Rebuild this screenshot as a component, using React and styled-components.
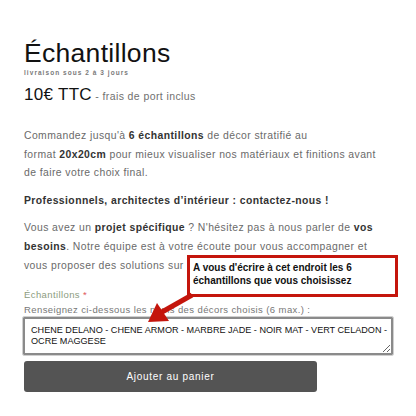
import styled, { createGlobalStyle } from "styled-components";

const GlobalStyle = createGlobalStyle`
  * { box-sizing: border-box; }
  body {
    margin: 0;
    background: #ffffff;
    font-family: "Liberation Sans", Arial, Helvetica, sans-serif;
  }
`;

export default function App() {
  return (
    <Page>
      <GlobalStyle />
      <Title>Échantillons</Title>
      <Delivery>livraison sous 2 à 3 jours</Delivery>
      <PriceRow>
        <Price>10€ TTC</Price>
        <PriceNote> - frais de port inclus</PriceNote>
      </PriceRow>

      <Text>
        Commandez jusqu'à <b>6 échantillons</b> de décor stratifié au
        <br />
        format <b>20x20cm</b> pour mieux visualiser nos matériaux et finitions
        avant de faire votre choix final.
      </Text>
      <Text>
        <b>Professionnels, architectes d’intérieur : contactez-nous !</b>
      </Text>
      <Text>
        Vous avez un <b>projet spécifique</b> ? N'hésitez pas à nous parler de{" "}
        <b>vos besoins</b>. Notre équipe est à votre écoute pour vous
        accompagner et vous proposer des solutions sur mesure.
      </Text>

      <Field>
        <Label>
          Échantillons <Star>*</Star>
        </Label>
        <Hint>Renseignez ci-dessous les noms des décors choisis (6 max.) :</Hint>
        <Area
          rows={2}
          defaultValue="CHENE DELANO - CHENE ARMOR - MARBRE JADE - NOIR MAT - VERT CELADON - OCRE MAGGESE"
        />
      </Field>
      <CartButton>Ajouter au panier</CartButton>

      <Callout>
        A vous d'écrire à cet endroit les 6
        <br />
        échantillons que vous choisissez
      </Callout>
      <Arrow viewBox="140 290 60 40" width="60" height="40">
        <line x1="192" y1="295" x2="162" y2="312" stroke="#c4150c" strokeWidth="5" />
        <polygon points="148,322 157,303 169,321" fill="#c4150c" />
      </Arrow>
    </Page>
  );
}

const Page = styled.div`
  position: relative;
  width: 416px;
  height: 416px;
  padding: 38px 24px 0 24px;
  overflow: hidden;
`;

const Title = styled.h1`
  margin: 0;
  font-size: 26.5px;
  font-weight: 400;
  line-height: 30px;
  letter-spacing: 0.3px;
  color: #121212;
`;

const Delivery = styled.div`
  font-size: 6.5px;
  font-weight: 700;
  line-height: 10px;
  letter-spacing: 1.05px;
  color: #7a7a7a;
`;

const PriceRow = styled.div`
  display: flex;
  align-items: baseline;
  margin-top: 5px;
  line-height: 24px;
`;

const Price = styled.span`
  font-size: 17px;
  letter-spacing: 0.3px;
  color: #121212;
`;

const PriceNote = styled.span`
  white-space: pre;
  font-size: 10.5px;
  letter-spacing: 0.4px;
  color: #707070;
`;

const Text = styled.p`
  margin: 0 0 9px 0;
  width: 364px;
  font-size: 10.4px;
  line-height: 18.6px;
  letter-spacing: 0.42px;
  color: #6a6a6a;

  &:first-of-type {
    margin-top: 19px;
  }

  b {
    color: #333333;
    font-weight: 700;
  }
`;

const Field = styled.div`
  display: flex;
  flex-direction: column;
  margin-top: 12px;
  width: 369px;
`;

const Label = styled.div`
  font-size: 9.5px;
  line-height: 16px;
  letter-spacing: 0.4px;
  color: #8c9c80;
`;

const Star = styled.span`
  color: #e05a5a;
`;

const Hint = styled.div`
  font-size: 9.5px;
  line-height: 14px;
  letter-spacing: 0.4px;
  color: #777777;
`;

const Area = styled.textarea`
  margin: 0 0 0 -1px;
  width: 370px;
  height: 38px;
  padding: 6px 1px 2px 6px;
  border: 2px solid #8a8a8a;
  outline: 1px solid #d0d0d0;
  border-radius: 1px;
  font-family: "Liberation Sans", Arial, sans-serif;
  font-size: 9.1px;
  line-height: 10.5px;
  color: #111111;
  background: #ffffff;
  resize: vertical;
  overflow: hidden;
`;

const CartButton = styled.button`
  display: block;
  margin-top: 6px;
  width: 293px;
  height: 31px;
  border: none;
  border-radius: 3px;
  background: #545454;
  color: #ffffff;
  font-family: "Liberation Sans", Arial, sans-serif;
  font-size: 10px;
  letter-spacing: 0.7px;
`;

const Callout = styled.div`
  position: absolute;
  left: 187px;
  top: 255px;
  width: 211px;
  height: 42px;
  padding: 4px 3px 0 3px;
  border: 3px solid #c4150c;
  background: #ffffff;
  font-size: 10px;
  font-weight: 700;
  line-height: 12.5px;
  color: #111111;
`;

const Arrow = styled.svg`
  position: absolute;
  left: 140px;
  top: 290px;
  overflow: visible;
`;
